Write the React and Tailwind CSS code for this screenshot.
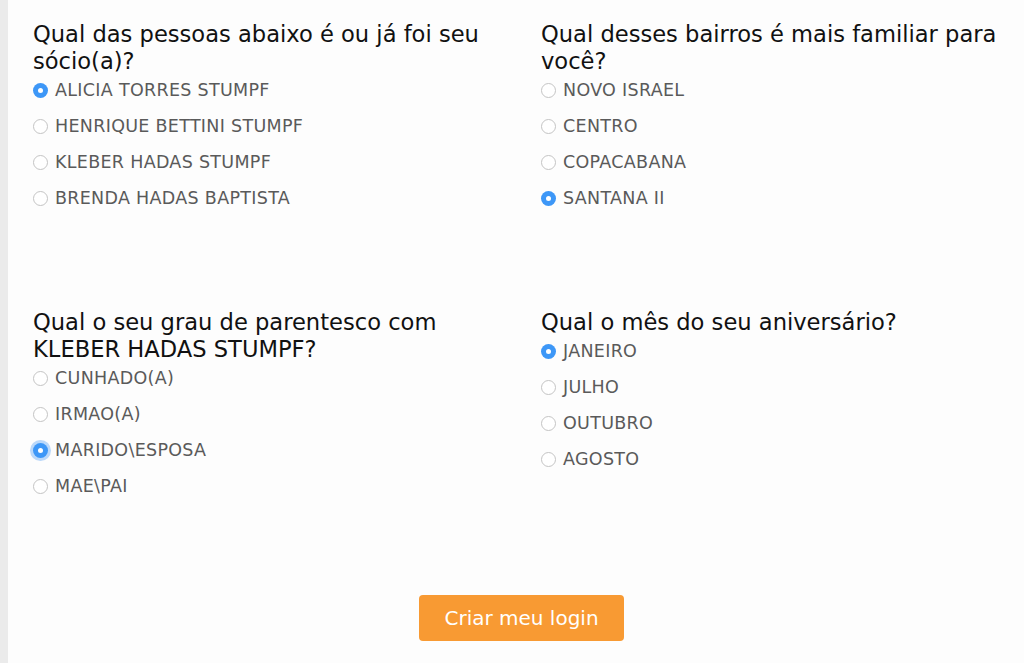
import React from "react";
import { useState } from "react";

const questions = [
  {
    id: "socio",
    title: "Qual das pessoas abaixo é ou já foi seu sócio(a)?",
    options: ["ALICIA TORRES STUMPF", "HENRIQUE BETTINI STUMPF", "KLEBER HADAS STUMPF", "BRENDA HADAS BAPTISTA"],
    selected: 0,
  },
  {
    id: "bairro",
    title: "Qual desses bairros é mais familiar para você?",
    options: ["NOVO ISRAEL", "CENTRO", "COPACABANA", "SANTANA II"],
    selected: 3,
  },
  {
    id: "parentesco",
    title: "Qual o seu grau de parentesco com KLEBER HADAS STUMPF?",
    options: ["CUNHADO(A)", "IRMAO(A)", "MARIDO\\ESPOSA", "MAE\\PAI"],
    selected: 2,
    focused: true,
  },
  {
    id: "mes",
    title: "Qual o mês do seu aniversário?",
    options: ["JANEIRO", "JULHO", "OUTUBRO", "AGOSTO"],
    selected: 0,
  },
];

const Radio = ({ checked, focused }) =>
  checked ? (
    <span
      className={
        "flex h-[15px] w-[15px] shrink-0 items-center justify-center rounded-full bg-[#3d97f7] " +
        (focused ? "ring-[3px] ring-[#9cc8f8]/70" : "")
      }
    >
      <span className="h-[5px] w-[5px] rounded-full bg-white" />
    </span>
  ) : (
    <span className="h-[15px] w-[15px] shrink-0 rounded-full border border-[#c4c4c4] bg-white" />
  );

const Question = ({ q, value, onChange }) => (
  <div className="px-[25px]">
    <h2 className="text-[22.6px] leading-[27px] text-[#111]">{q.title}</h2>
    <div className="mt-[5px] flex flex-col gap-4">
      {q.options.map((opt, i) => (
        <label
          key={opt}
          className="flex h-5 cursor-pointer items-center gap-[7px] text-[17.5px] tracking-[0.3px] text-[#5a5a5a]"
          onClick={() => onChange(i)}
        >
          <Radio checked={value === i} focused={q.focused && value === i} />
          {opt}
        </label>
      ))}
    </div>
  </div>
);

const App = () => {
  const [answers, setAnswers] = useState(
    Object.fromEntries(questions.map((q) => [q.id, q.selected]))
  );

  return (
    <main
      className="flex min-h-[663px] w-full bg-[#fdfdfd]"
      style={{ fontFamily: '"DejaVu Sans", Verdana, sans-serif' }}
    >
      <div className="w-2 shrink-0 bg-[#ebebeb]" />
      <section className="flex-1 pt-[21px]">
        <div className="grid grid-cols-2 gap-y-[101px]">
          {questions.map((q) => (
            <Question
              key={q.id}
              q={q}
              value={answers[q.id]}
              onChange={(i) => setAnswers({ ...answers, [q.id]: i })}
            />
          ))}
        </div>
        <div className="mt-[99px] flex justify-center pl-[11px]">
          <button className="h-[46px] w-[205px] rounded-[4px] bg-[#f89a33] text-[20px] text-white">
            Criar meu login
          </button>
        </div>
      </section>
    </main>
  );
};

export default App;
